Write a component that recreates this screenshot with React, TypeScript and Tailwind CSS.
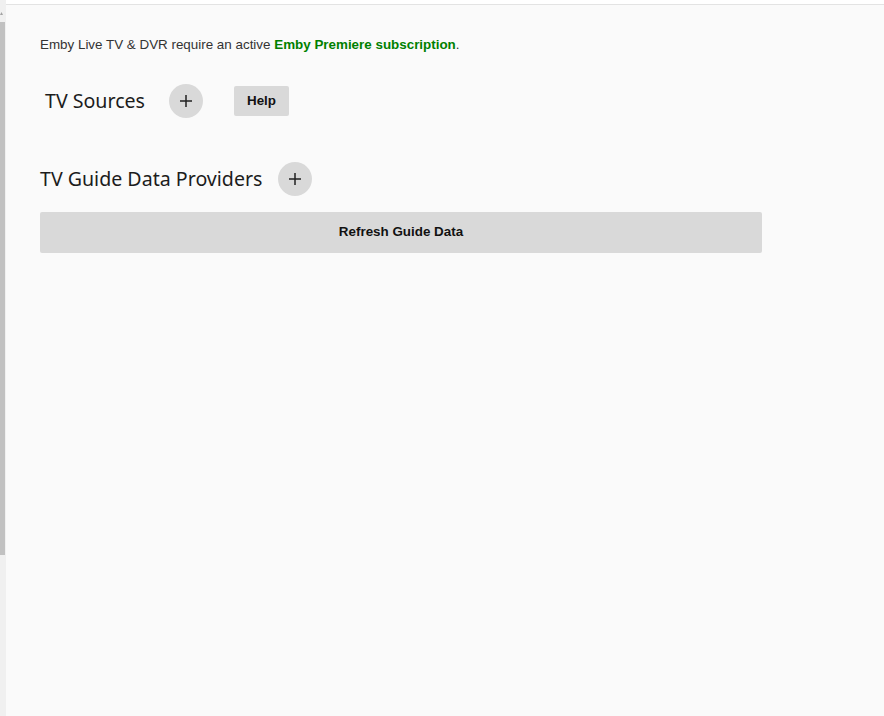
import React from "react";

function PlusButton() {
  return (
    <button className="flex h-[34px] w-[34px] items-center justify-center rounded-full bg-[#d9d9d9] text-[#222]">
      <svg width="14" height="14" viewBox="0 0 14 14">
        <path d="M7 1v12M1 7h12" stroke="#222" strokeWidth="1.5" />
      </svg>
    </button>
  );
}

export default function App() {
  return (
    <div className="flex h-[716px] w-[884px] overflow-hidden bg-[#fafafa]" style={{ fontFamily: '"Liberation Sans", Arial, sans-serif' }}>
      <div className="flex w-[6px] shrink-0 flex-col bg-[#f0f0f0]">
        <div className="h-[12px]" />
        <div className="ml-0 h-[3px] w-[3px] text-[0px]">
          <svg width="3" height="3" viewBox="0 0 3 3"><path d="M0 3L1.5 0L3 3Z" fill="#a3a3a3" /></svg>
        </div>
        <div className="h-[7px]" />
        <div className="h-[533px] w-[5px] bg-[#c1c1c1]" />
      </div>
      <div className="flex min-w-0 flex-1 flex-col">
        <div className="h-[4px] bg-white" />
        <div className="h-px bg-[#e3e3e3]" />
        <div className="flex flex-col pl-[34px] pt-[32px]">
          <p className="text-[13.4px] leading-[16px] text-[#333]">
            Emby Live TV &amp; DVR require an active{" "}
            <span className="font-bold text-[#008000]">Emby Premiere subscription</span>.
          </p>
          <div className="mt-[31px] flex items-center pl-[5px]">
            <h2 className="text-[19.6px] leading-[28px] text-[#1c1c1c]" style={{ fontFamily: '"Noto Sans", "Open Sans", sans-serif' }}>
              TV Sources
            </h2>
            <div className="ml-[24px]">
              <PlusButton />
            </div>
            <button className="ml-[31px] flex h-[30px] w-[55px] items-center justify-center rounded-[2px] bg-[#d9d9d9] text-[13.4px] font-bold text-[#111]">
              Help
            </button>
          </div>
          <div className="mt-[44px] flex items-center">
            <h2 className="text-[19.6px] leading-[28px] text-[#1c1c1c]" style={{ fontFamily: '"Noto Sans", "Open Sans", sans-serif' }}>
              TV Guide Data Providers
            </h2>
            <div className="ml-[16px]">
              <PlusButton />
            </div>
          </div>
          <button className="mt-[16px] flex h-[41px] w-[722px] items-center justify-center rounded-[2px] bg-[#d9d9d9] text-[13.4px] font-bold text-[#111]">
            Refresh Guide Data
          </button>
        </div>
      </div>
    </div>
  );
}
